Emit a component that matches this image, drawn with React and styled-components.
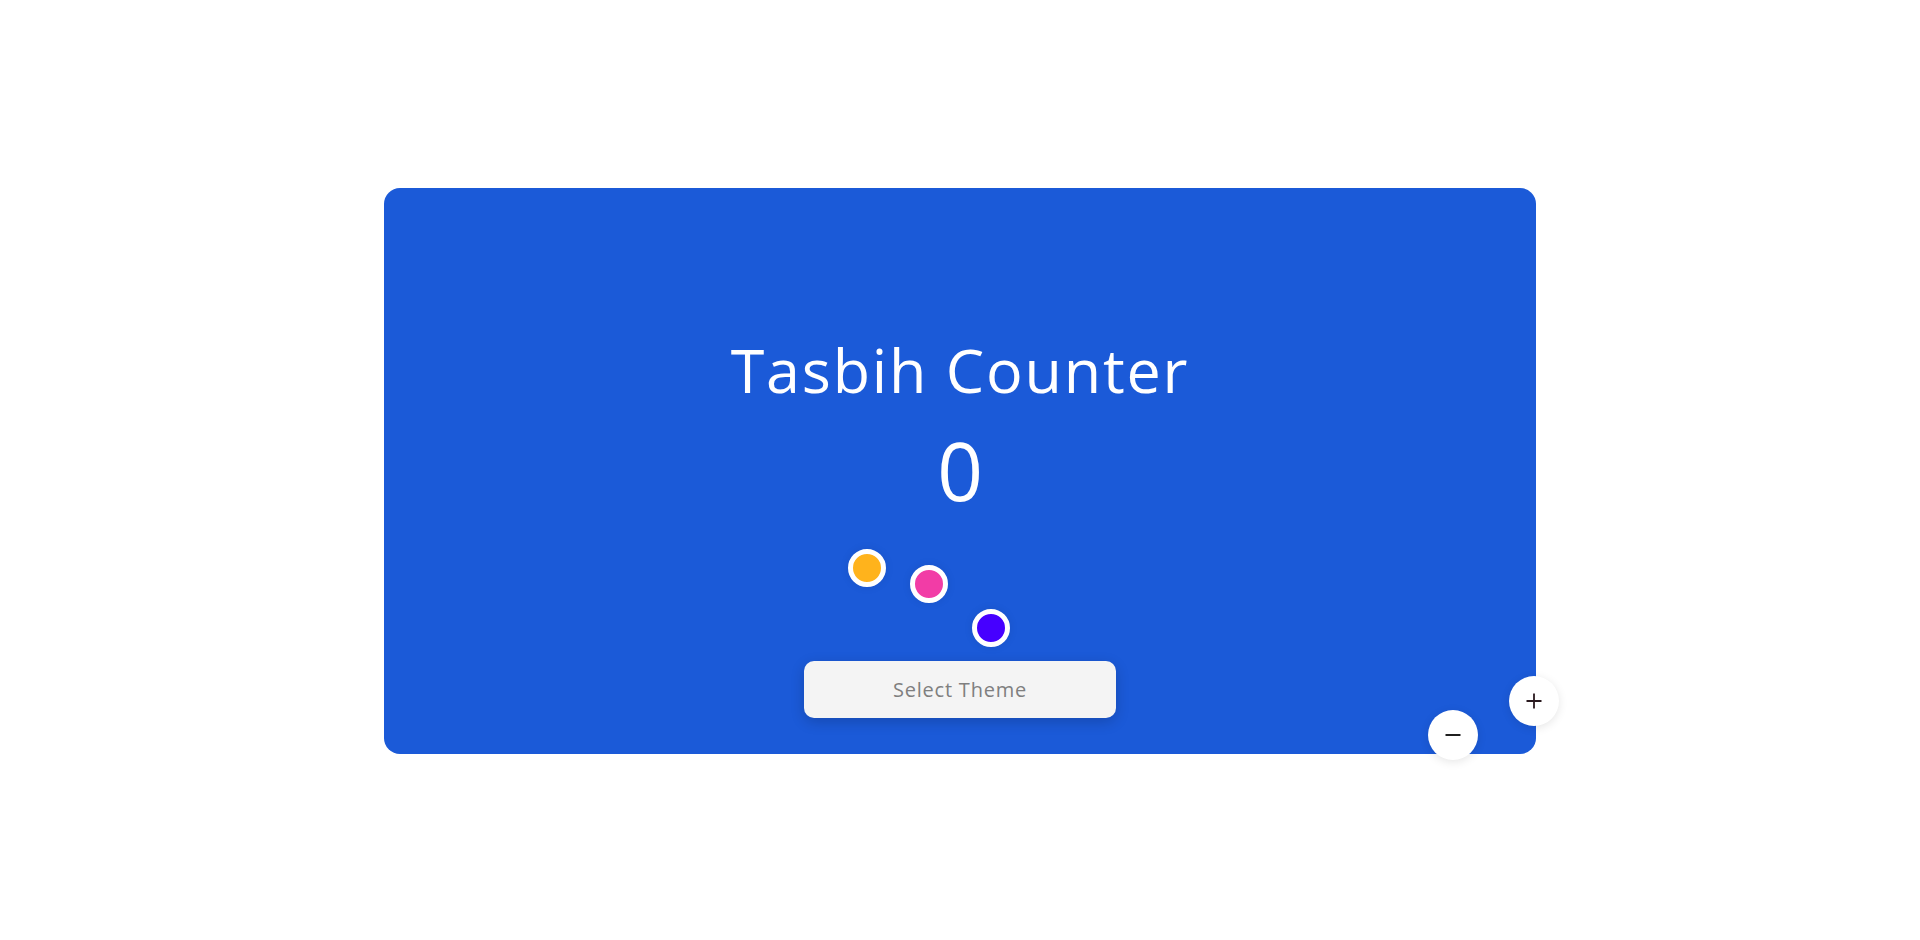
import React, { useState } from 'react';
import styled, { createGlobalStyle } from 'styled-components';

const GlobalStyle = createGlobalStyle`
  html, body {
    margin: 0;
    padding: 0;
    background: #ffffff;
    font-family: "Open Sans", "Liberation Sans", sans-serif;
  }
`;

const Page = styled.div`
  width: 100vw;
  height: 100vh;
  box-sizing: border-box;
  padding-top: 2px;
  display: flex;
  align-items: center;
  justify-content: center;
`;

const Card = styled.div`
  position: relative;
  width: 1152px;
  height: 566px;
  box-sizing: border-box;
  padding-top: 140px;
  background: #1b5ad8;
  border-radius: 16px;
  display: flex;
  flex-direction: column;
  align-items: center;
`;

const Title = styled.h1`
  margin: 0;
  font-size: 61px;
  font-weight: 400;
  line-height: normal;
  color: #ffffff;
  letter-spacing: 1.8px;
`;

const Count = styled.div`
  margin-top: 4px;
  font-size: 80px;
  line-height: normal;
  color: #ffffff;
`;

const DotRow = styled.div`
  margin-top: 25px;
  height: 112px;
  display: flex;
  align-items: flex-start;
  gap: 24px;
  padding-right: 62px;
`;

const Dot = styled.button`
  width: 38px;
  height: 38px;
  margin-top: ${p => p.$drop}px;
  padding: 0;
  border: 5px solid #ffffff;
  border-radius: 50%;
  background: ${p => p.$color};
  box-sizing: border-box;
  box-shadow: 0 0 10px rgba(0, 0, 0, 0.08);
  cursor: pointer;
`;

const ThemeButton = styled.button`
  width: 312px;
  height: 57px;
  border: none;
  border-radius: 10px;
  background: #f4f4f4;
  color: #7f7f7f;
  font-family: inherit;
  font-size: 20px;
  letter-spacing: 0.8px;
  box-shadow: 0 4px 14px rgba(0, 0, 0, 0.18);
  cursor: pointer;
`;

const RoundButton = styled.button`
  position: absolute;
  right: ${p => p.$right}px;
  bottom: ${p => p.$bottom}px;
  width: 50px;
  height: 50px;
  padding: 0;
  border: none;
  border-radius: 50%;
  background: #ffffff;
  display: flex;
  align-items: center;
  justify-content: center;
  box-shadow: 0 2px 10px rgba(0, 0, 0, 0.1);
  cursor: pointer;
`;

const PlusIcon = () => (
  <svg width="16" height="16" viewBox="0 0 16 16">
    <path d="M8 0.5V15.5M0.5 8H15.5" stroke="#2a1a1f" strokeWidth="1.8" fill="none" />
  </svg>
);

const MinusIcon = () => (
  <svg width="16" height="16" viewBox="0 0 16 16">
    <path d="M0.5 8H15.5" stroke="#1f1f1f" strokeWidth="2" fill="none" />
  </svg>
);

const themes = [
  { key: 'yellow', color: '#ffb31c', drop: 0 },
  { key: 'pink', color: '#f23ca6', drop: 16 },
  { key: 'purple', color: '#4600ff', drop: 60 },
];

export default function App() {
  const [count, setCount] = useState(0);
  const [bg, setBg] = useState('#1b5ad8');

  return (
    <Page>
      <GlobalStyle />
      <Card style={{ background: bg }}>
        <Title>Tasbih Counter</Title>
        <Count>{count}</Count>
        <DotRow>
          {themes.map(t => (
            <Dot key={t.key} $color={t.color} $drop={t.drop} onClick={() => setBg(t.color)} />
          ))}
        </DotRow>
        <ThemeButton>Select Theme</ThemeButton>
        <RoundButton $right={-23} $bottom={28} onClick={() => setCount(c => c + 1)}>
          <PlusIcon />
        </RoundButton>
        <RoundButton $right={58} $bottom={-6} onClick={() => setCount(c => Math.max(0, c - 1))}>
          <MinusIcon />
        </RoundButton>
      </Card>
    </Page>
  );
}
